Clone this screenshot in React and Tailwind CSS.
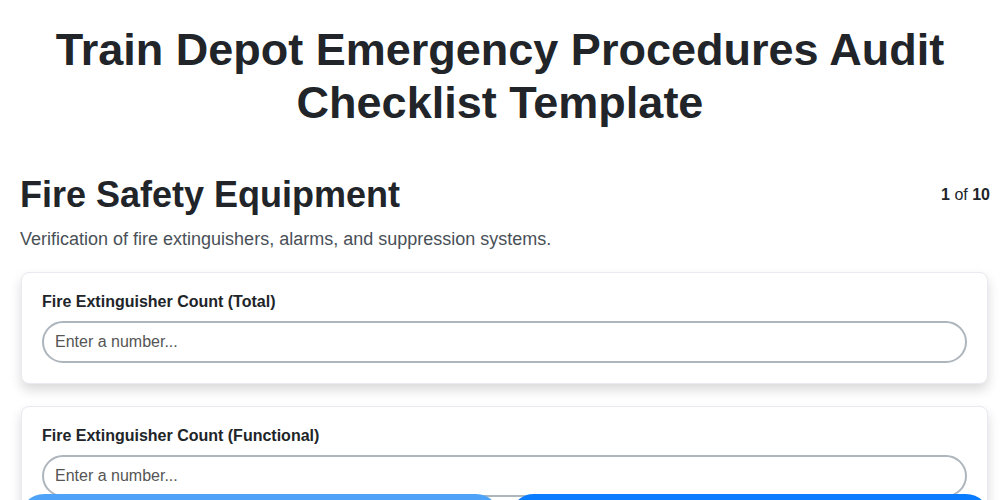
export default function App() {
  const fields = [
    "Fire Extinguisher Count (Total)",
    "Fire Extinguisher Count (Functional)",
    "Fire Alarm Panels Tested",
  ]

  return (
    <div className="min-h-screen bg-white text-[#212529] font-['Liberation_Sans',Arial,sans-serif]">
      <h1 className="text-center font-bold text-[45px] leading-[53px] pt-[23px] px-10">
        Train Depot Emergency Procedures Audit Checklist Template
      </h1>

      <div className="px-5 pt-[44px] pb-24">
        <div className="flex items-start justify-between">
          <h2 className="text-[36px] font-bold leading-[44px]">Fire Safety Equipment</h2>
          <div className="text-[16px] pt-[10px] mr-[-10px]">
            <span className="font-bold">1</span> of <span className="font-bold">10</span>
          </div>
        </div>
        <p className="text-[18px] leading-[26px] text-[#495057] mt-[9px]">
          Verification of fire extinguishers, alarms, and suppression systems.
        </p>

        <div className="mt-[20px] flex flex-col gap-[22px] ml-px mr-[-8px]">
          {fields.map((f) => (
            <div
              key={f}
              className="bg-white border border-[#e9e9ef] rounded-lg px-5 pt-[19px] pb-[20px] shadow-[0_6px_12px_rgba(0,0,0,0.15)]"
            >
              <label className="block text-[16px] leading-[19px] font-bold mb-[10px]">{f}</label>
              <input
                type="text"
                placeholder="Enter a number..."
                className="w-full h-[42px] rounded-full border-2 border-[#adb5bd] px-[11px] text-[16px] placeholder:text-[#555] outline-none bg-white"
              />
            </div>
          ))}
        </div>
      </div>

      <div className="fixed left-5 right-[10px] bottom-[-42px] flex gap-[10px]">
        <button className="flex-1 h-12 rounded-full bg-[#4ea3f8] text-white font-bold">
          Previous
        </button>
        <button className="flex-1 h-12 rounded-full bg-[#0a7cff] text-white font-bold">
          Next
        </button>
      </div>
    </div>
  )
}
